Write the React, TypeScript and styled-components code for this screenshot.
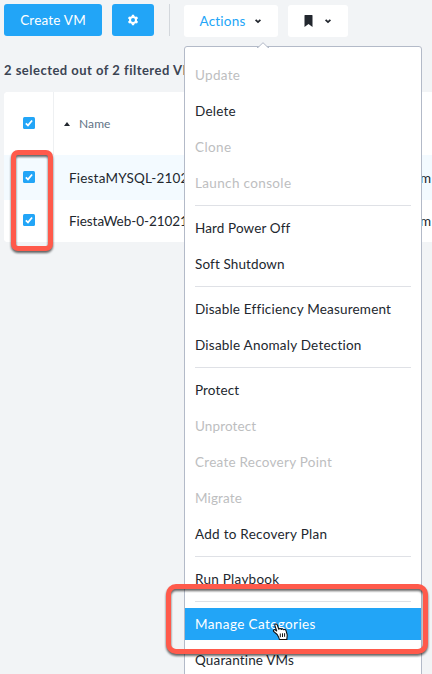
import React from "react";
import styled, { createGlobalStyle } from "styled-components";

const GlobalStyle = createGlobalStyle`
  * { box-sizing: border-box; }
  body {
    margin: 0;
    overflow: hidden;
    background: #f2f4f6;
    color: #22272e;
    font-family: Lato, "Liberation Sans", sans-serif;
    font-size: 13px;
  }
`;

const Page = styled.main`
  position: relative;
  width: 432px;
  height: 674px;
  overflow: hidden;
  padding: 4px 0 0 4px;
`;

const Toolbar = styled.div`
  display: flex;
  height: 33px;
`;

const Button = styled.button<{ $width: number; $primary?: boolean }>`
  display: flex;
  align-items: center;
  justify-content: center;
  width: ${(p) => p.$width}px;
  height: 32px;
  margin: ${(p) => (p.$primary ? "0 10px 0 0" : "1px 10px 0 0")};
  padding: 0;
  border: 0;
  border-radius: 3px;
  background: ${(p) => (p.$primary ? "#22a5f7" : "#fff")};
  color: ${(p) => (p.$primary ? "#fff" : "#22a5f7")};
  font: 400 13.5px Lato, sans-serif;
  white-space: nowrap;
`;

const Label = styled.span<{ $track: number }>`
  letter-spacing: ${(p) => p.$track}px;
`;

const Divider = styled.i`
  width: 1px;
  height: 32px;
  margin: 0 14px 0 5px;
  background: #d3d7dc;
`;

const Chevron = styled.svg<{ $gap: number }>`
  width: 8px;
  height: 8px;
  margin: 0 0 1px ${(p) => p.$gap}px;
`;

const Summary = styled.h2`
  margin: 24px 0 0;
  height: 31px;
  font-size: 13px;
  line-height: 18px;
  font-weight: 700;
  letter-spacing: 0.48px;
  color: #3b4453;
  white-space: nowrap;
`;

const Table = styled.section`
  border-radius: 4px 0 0 4px;
  overflow: hidden;
  background: #fff;
`;

const Row = styled.div<{ $height: number; $selected?: boolean }>`
  display: grid;
  grid-template-columns: 50px 366px 1fr;
  align-items: center;
  height: ${(p) => p.$height}px;
  background: ${(p) => (p.$selected ? "#f3faff" : "#fff")};
`;

const CheckCell = styled.div<{ $header?: boolean; $lift?: number }>`
  display: flex;
  align-items: center;
  justify-content: center;
  height: 100%;
  padding-left: 1px;
  padding-bottom: ${(p) => p.$lift ?? 0}px;
  border-right: ${(p) => (p.$header ? "1px solid #eef0f2" : "1px solid transparent")};
`;

const HeaderCell = styled.div`
  display: flex;
  align-items: center;
  gap: 9px;
  padding-left: 10px;
  color: #627386;
  font-size: 12px;
  letter-spacing: 0.1px;
`;

const Cell = styled.div<{ $inset?: number; $track?: number }>`
  padding-left: ${(p) => p.$inset ?? 0}px;
  font-size: 13.5px;
  font-weight: 400;
  letter-spacing: ${(p) => p.$track ?? 0}px;
  white-space: nowrap;
`;

const Menu = styled.nav`
  position: absolute;
  left: 184px;
  top: 46px;
  width: 238px;
  height: 650px;
  padding-top: 10px;
  border: 1px solid #b3bac8;
  border-radius: 3px;
  background: #fff;
`;

const Notch = styled.svg`
  position: absolute;
  left: 72px;
  top: -5px;
  width: 12px;
  height: 6px;
`;

const Item = styled.div<{ $state?: "disabled" | "active"; $track: number }>`
  height: 32px;
  margin: 2px 0;
  padding: 0 10px;
  line-height: 32px;
  font-size: 13.5px;
  letter-spacing: ${(p) => p.$track}px;
  white-space: nowrap;
  background: ${(p) => (p.$state === "active" ? "#22a5f7" : "transparent")};
  color: ${(p) =>
    p.$state === "active" ? "#fff" : p.$state === "disabled" ? "#bdbebf" : "#22272e"};
`;

const Group = styled.div`
  display: flow-root;
  & > ${Item} + ${Item} { margin-top: 4px; }
`;

const Separator = styled.hr`
  height: 1px;
  margin: 4px 10px;
  border: 0;
  background: #dfe1e6;
`;

const Callout = styled.div<{ $x: number; $y: number; $w: number; $h: number; $r: number }>`
  position: absolute;
  left: ${(p) => p.$x}px;
  top: ${(p) => p.$y}px;
  width: ${(p) => p.$w}px;
  height: ${(p) => p.$h}px;
  border: 5px solid #ff5a4b;
  border-radius: ${(p) => p.$r}px;
  filter: drop-shadow(0 2px 1.2px rgba(0, 0, 0, 0.6));
`;

const Pointer = styled.svg`
  position: absolute;
  left: 272px;
  top: 623px;
  width: 17px;
  height: 18px;
`;

type Entry = { text: string; track: number; state?: "disabled" | "active" };

const groups: Entry[][] = [
  [
    { text: "Update", track: 0.3, state: "disabled" },
    { text: "Delete", track: 0.25 },
    { text: "Clone", track: 0.38, state: "disabled" },
    { text: "Launch console", track: 0.35, state: "disabled" },
  ],
  [
    { text: "Hard Power Off", track: 0.12 },
    { text: "Soft Shutdown", track: 0.12 },
  ],
  [
    { text: "Disable Efficiency Measurement", track: 0.2 },
    { text: "Disable Anomaly Detection", track: 0.22 },
  ],
  [
    { text: "Protect", track: 0.12 },
    { text: "Unprotect", track: 0.12, state: "disabled" },
    { text: "Create Recovery Point", track: 0.26, state: "disabled" },
    { text: "Migrate", track: 0.12, state: "disabled" },
    { text: "Add to Recovery Plan", track: 0.27 },
  ],
  [{ text: "Run Playbook", track: 0.27 }],
  [
    { text: "Manage Categories", track: 0.4, state: "active" },
    { text: "Quarantine VMs", track: 0.15 },
  ],
];

const Down = ({ gap }: { gap: number }) => (
  <Chevron $gap={gap} viewBox="0 0 8 8">
    <path d="M1.6 2.8 4 5.1l2.4-2.3" fill="none" stroke="#22272e" strokeWidth="1.8" />
  </Chevron>
);

const Check = () => (
  <svg width="12" height="12" viewBox="0 0 12 12">
    <rect width="12" height="12" rx="1.5" fill="#22a5f7" />
    <path d="M2.8 6.3 5 8.4l4.1-4.9" fill="none" stroke="#fff" strokeWidth="1.7" />
  </svg>
);

const Gear = () => (
  <svg width="12" height="12" viewBox="0 0 12 12">
    <circle cx="6" cy="6" r="3" fill="none" stroke="#fff" strokeWidth="2" />
    <g fill="#fff">
      {[0, 60, 120, 180, 240, 300].map((a) => (
        <path key={a} d="M4.6 2.8 4.9.8h2.2l.3 2z" transform={`rotate(${a} 6 6)`} />
      ))}
    </g>
  </svg>
);

export default function App() {
  return (
    <Page>
      <GlobalStyle />
      <Toolbar>
        <Button $primary $width={98}><Label $track={0.2}>Create VM</Label></Button>
        <Button $primary $width={42} aria-label="Settings"><Gear /></Button>
        <Divider />
        <Button $width={94}><Label $track={0.2}>Actions</Label><Down gap={9} /></Button>
        <Button $width={60} aria-label="Bookmarks">
          <svg width="9" height="12" viewBox="0 0 9 12">
            <path d="M.5.5Q.5 0 1 0h7q.5 0 .5.5V12l-4-3-4 3z" fill="#22272e" />
          </svg>
          <Down gap={11} />
        </Button>
      </Toolbar>
      <Summary>2 selected out of 2 filtered VMs</Summary>
      <Table>
        <Row $height={63}>
          <CheckCell $header $lift={1}><Check /></CheckCell>
          <HeaderCell>
            <svg width="6" height="4" viewBox="0 0 6 4"><path d="M3 0 6 4H0z" fill="#22272e" /></svg>
            Name
          </HeaderCell>
        </Row>
        <Row $height={45} $selected>
          <CheckCell $lift={1}><Check /></CheckCell>
          <Cell $inset={15} $track={0.2}>FiestaMYSQL-210215</Cell>
          <Cell>m</Cell>
        </Row>
        <Row $height={42}>
          <CheckCell $lift={2}><Check /></CheckCell>
          <Cell $inset={15} $track={-0.05}>FiestaWeb-0-210215</Cell>
          <Cell>m</Cell>
        </Row>
      </Table>
      <Menu>
        <Notch viewBox="0 0 12 6">
          <path d="M1 5.5 6 .7l5 4.8V6H1z" fill="#fff" />
          <path d="M0 5.5h1L6 .7l5 4.8h1" fill="none" stroke="#b3bac8" />
        </Notch>
        {groups.map((entries, i) => (
          <React.Fragment key={i}>
            {i > 0 && <Separator />}
            <Group>
              {entries.map((e) => (
                <Item key={e.text} $state={e.state} $track={e.track}>{e.text}</Item>
              ))}
            </Group>
          </React.Fragment>
        ))}
      </Menu>
      <Callout $x={11} $y={150} $w={42} $h={101} $r={7} />
      <Callout $x={166} $y={584} $w={262} $h={70} $r={10} />
      <Pointer viewBox="0 0 17 18">
        <path
          d="M5.2 11.5 2.1 8.8C.5 7.4 2 6 3.5 7l1.2 1L2.9 2.8C2.4 1 4.6.3 5.3 2l1.5 4.3c.4-1 2-1 2.5.1.6-.8 2-.6 2.4.4.7-.6 2-.2 2.3.8l1.1 3.8c.4 1.8-.4 3.1-.2 5.1H7.4c-.2-1.6-1.2-3.3-2.2-5z"
          fill="#fff"
          stroke="#111"
          strokeWidth="1.1"
          strokeLinejoin="round"
        />
        <path d="M8.3 10.5v3.7M10.5 10.3V14M12.6 10.2v3.6" stroke="#111" />
      </Pointer>
    </Page>
  );
}
